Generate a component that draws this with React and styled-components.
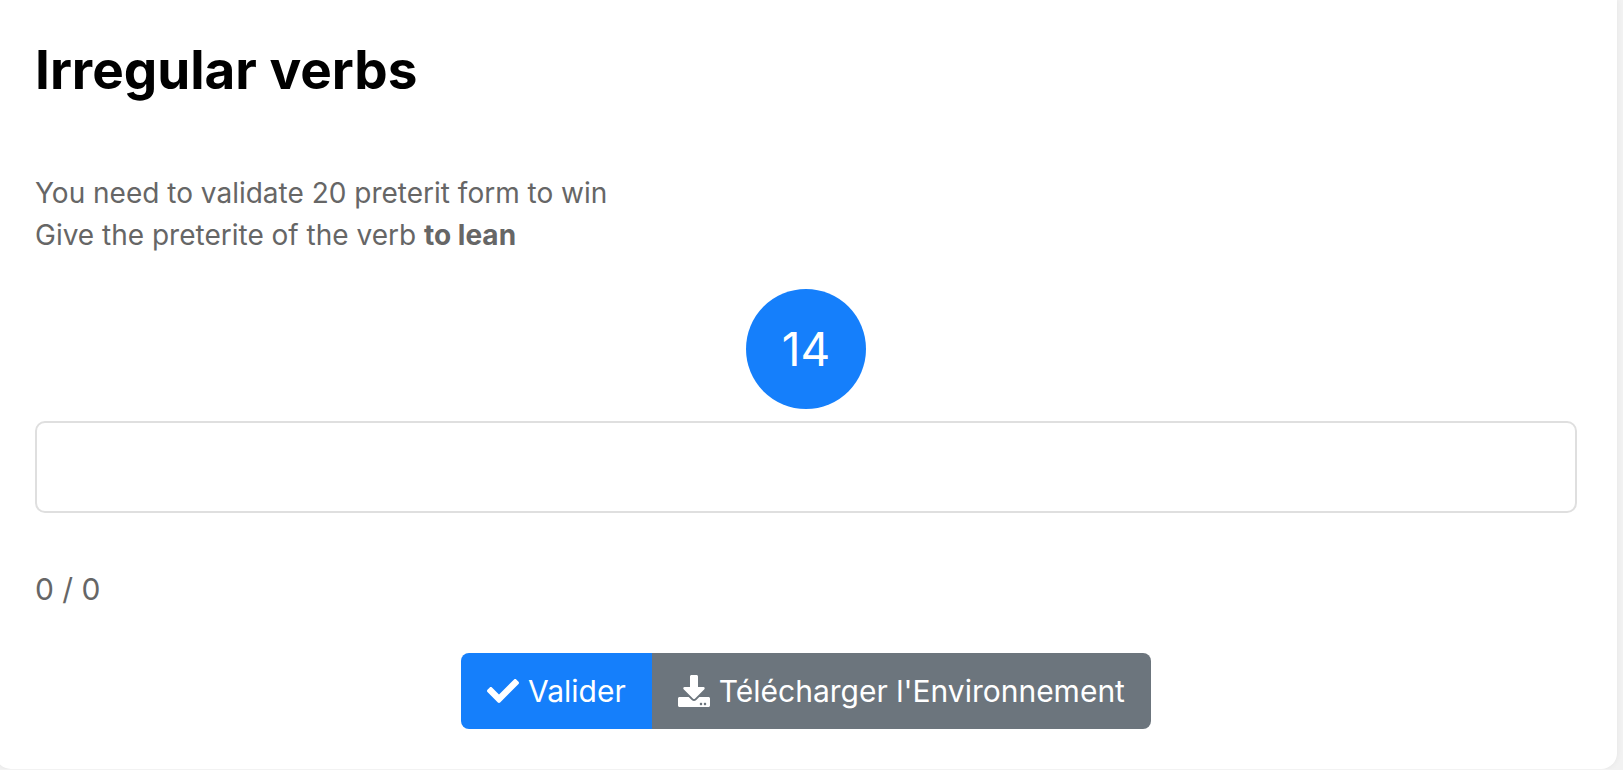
import React from "react";
import styled, { createGlobalStyle } from "styled-components";
import { FaCheck, FaDownload } from "react-icons/fa";

const GlobalStyle = createGlobalStyle`
  *, *::before, *::after { box-sizing: border-box; }
  body {
    margin: 0;
    background: #f2f2f2;
    color: #666666;
    font-family: Inter, "Liberation Sans", sans-serif;
    font-size: 28px;
    line-height: 42px;
  }
`;

const Card = styled.main`
  margin: 0 6px 0 -5px;
  padding: 36px 40px 40px;
  background: #ffffff;
  border-radius: 0 0 16px 16px;
  box-shadow: 0 0 6px rgba(0, 0, 0, 0.06);
`;

const Title = styled.h1`
  margin: 0 0 68px;
  color: #000000;
  font-size: 53px;
  font-weight: 700;
  line-height: 68px;
`;

const Instructions = styled.p`
  margin: 0 0 33px;
`;

const Timer = styled.div`
  display: flex;
  align-items: center;
  justify-content: center;
  width: 120px;
  height: 120px;
  margin: 0 auto 12px;
  border-radius: 50%;
  background: #157ffb;
  color: #ffffff;
  font-size: 46px;
  font-weight: 400;
`;

const Answer = styled.input`
  display: block;
  width: 100%;
  height: 92px;
  padding: 0 24px;
  border: 2px solid #dfdfdf;
  border-radius: 10px;
  background: #ffffff;
  color: inherit;
  font: inherit;
  outline: none;
`;

const Score = styled.p`
  margin: 52px 0 40px;
  font-size: 30px;
  line-height: 48px;
`;

const ButtonGroup = styled.div`
  display: flex;
  justify-content: center;
`;

const Button = styled.button`
  display: flex;
  align-items: center;
  gap: 9px;
  height: 76px;
  padding: 0 26px;
  border: 0;
  background: ${({ $variant }) => ($variant === "primary" ? "#157ffb" : "#6c757d")};
  color: #ffffff;
  font: inherit;
  font-size: 30px;
  cursor: pointer;

  &:first-child { border-radius: 8px 0 0 8px; }
  &:last-child { border-radius: 0 8px 8px 0; }
  svg { flex: none; width: 32px; height: 32px; }
`;

export default function App() {
  return (
    <>
      <GlobalStyle />
      <Card>
        <Title>Irregular verbs</Title>
        <Instructions>
          You need to validate 20 preterit form to win
          <br />
          <label htmlFor="answer">
            Give the preterite of the verb <strong>to lean</strong>
          </label>
        </Instructions>
        <Timer role="timer">14</Timer>
        <Answer id="answer" type="text" autoComplete="off" />
        <Score>0 / 0</Score>
        <ButtonGroup>
          <Button type="button" $variant="primary">
            <FaCheck aria-hidden="true" />
            Valider
          </Button>
          <Button type="button" $variant="secondary">
            <FaDownload aria-hidden="true" />
            Télécharger l'Environnement
          </Button>
        </ButtonGroup>
      </Card>
    </>
  );
}
